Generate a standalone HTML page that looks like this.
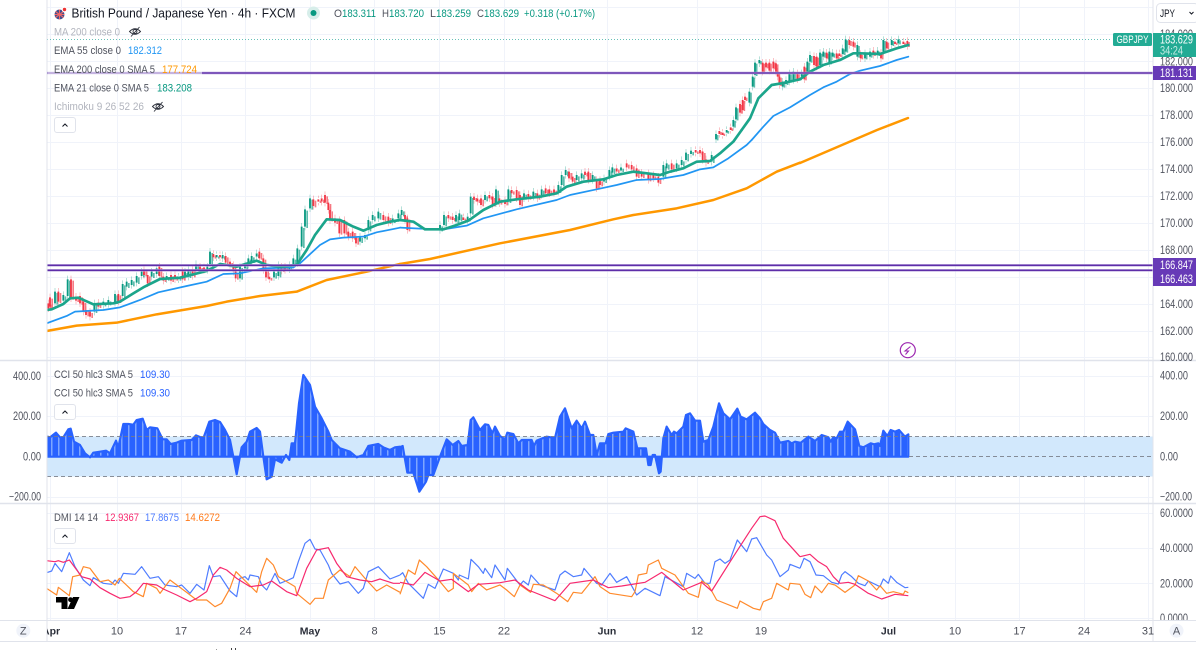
<!DOCTYPE html>
<html><head><meta charset="utf-8"><title>GBPJPY</title>
<style>
html,body{margin:0;padding:0;background:#fff;width:1196px;height:650px;overflow:hidden}
svg{display:block}
text{font-family:"Liberation Sans",sans-serif;font-size:11px;fill:#50535e}
.t{fill:#131722}.a{fill:#50535e;font-size:11.5px}.f{fill:#b2b5be}.d{text-anchor:middle;font-size:11px;fill:#4a4d57}
.b{font-weight:bold;fill:#2a2e39;font-size:10.5px}.g{stroke:#089981}.r{stroke:#f23645}
.o{fill:#089981;font-size:11px}
.ln{fill:none;stroke-linejoin:round;stroke-linecap:round}
</style></head><body>
<svg width="1196" height="650" viewBox="0 0 1196 650" xmlns="http://www.w3.org/2000/svg">
<defs>
<pattern id="st" patternUnits="userSpaceOnUse" width="21" height="30"><rect width="21" height="30" fill="#2962ff"/><rect x="6" width="4.500" height="30" fill="#7ea6ff"/></pattern>
<clipPath id="cp"><rect x="47" y="0" width="1106" height="360"/></clipPath>
<g id="c1" fill="none">
<path class="g" d="M165 365V400M190 375V392M203 328V378M283 400V425M310 395V405M325 390V402M345 372V398M368 342V378M380 335V350M395 330V345M410 318V338M425 305V318M455 305V320M470 295V312M500 318V328M535 320V328M555 305V318M565 300V320M588 282V300M622 290V300M630 245V282M650 255V262M668 255V265M720 290V325M735 285V295M745 265V285M755 258V275M770 250V260M822 305V322M835 285V318M868 285V298M880 265V285M892 235V280M905 170V230M915 118V170M930 85V115M1080 200V215M1095 195V205M1105 150V180M1118 135V150M1135 125V145M1178 145V155M1195 130V145"/>
<path class="r" d="M145 400V415M150 382V410M175 365V395M213 328V385M228 380V392M240 378V400M250 395V425M258 420V435M270 425V440M295 398V410M355 372V395M432 298V315M443 315V340M478 290V318M490 320V332M513 315V332M525 315V328M548 303V328M578 300V318M600 290V298M612 292V300M640 252V262M660 255V262M677 258V278M690 275V285M700 285V305M707 305V325M778 245V265M790 265V300M798 300V322M808 320V328M845 290V302M855 290V300M940 88V108M955 88V95M965 85V95M975 75V98M985 98V120M990 120V150M1005 145V158M1018 150V190M1033 150V190M1045 185V200M1058 185V205M1068 200V220M1150 135V150M1165 140V158"/>
</g>
<g id="c2" fill="none">
<path class="g" d="M5 240V255M120 285V300M132 255V285M168 255V275M178 250V270M203 260V270M212 200V250M255 195V210M288 178V220M325 178V215M372 190V205M400 185V200M425 178V195M475 165V185M485 135V165M497 120V135M530 135V150M545 130V145M578 135V150M612 145V155M628 120V140M637 112V128M663 112V122M790 105V140M800 100V115M830 100V115M845 90V105M858 68V90M873 62V72M935 75V95"/>
<path class="r" d="M15 255V270M22 265V300M145 255V265M158 260V270M190 262V270M222 200V210M232 205V215M243 205V225M268 195V205M278 200V225M298 205V220M315 210V222M335 180V190M350 180V205M360 195V225M385 192V205M412 190V205M437 175V190M448 178V190M462 178V188M507 125V145M518 140V155M555 125V135M565 125V150M590 150V175M600 150V165M650 115V125M680 100V112M695 105V118M710 115V140M725 128V140M745 130V150M760 135V145M775 140V158M815 100V118M887 60V68M900 60V70M908 65V90M918 88V98"/>
</g>
<g id="c3" fill="none">
<path class="g" d="M48 312V328M80 300V308M100 270V290M108 232V268M148 185V218M158 140V170M165 98V135M178 90V100M248 155V170M258 150V162M268 130V155M280 125V150M305 130V140M322 95V125M330 75V95M360 68V105M370 65V80M388 65V100M398 68V80M428 55V72M437 28V65M472 45V80M495 70V85M510 65V80M533 62V75M550 30V65M575 30V45M595 28V40"/>
<path class="r" d="M58 303V312M68 308V315M92 292V300M120 222V248M128 210V240M135 200V210M188 98V125M198 98V112M208 98V122M220 95V115M228 100V125M233 125V140M238 140V165M292 130V148M313 110V148M342 78V105M350 80V110M380 68V85M410 70V85M418 70V78M448 30V45M460 35V50M482 72V85M520 62V75M543 68V85M560 35V55M585 35V42M610 35V42M622 33V48"/>
</g>
</defs>

<!-- grid -->
<g stroke="#f0f3fa" stroke-width="1" fill="none">
<path d="M47 7.500H1153M47 34.500H1153M47 61.500H1153M47 88.500H1153M47 115.500H1153M47 142.500H1153M47 169.500H1153M47 196.500H1153M47 223.500H1153M47 250.500H1153M47 277.500H1153M47 304.500H1153M47 331.500H1153M47 357.500H1153"/>
<path d="M47 376.500H1153M47 416.500H1153M47 497.500H1153M47 513.500H1153M47 548.500H1153M47 583.500H1153M47 618.500H1153"/>
<path d="M50.500 0V620M117.500 0V620M181.500 0V620M245.500 0V620M310.500 0V620M374.500 0V620M439.500 0V620M504.500 0V620M607.500 0V620M697.500 0V620M761.500 0V620M888.500 0V620M955.500 0V620M1019.500 0V620M1084.500 0V620M1148.500 0V620"/>
</g>

<!-- candles -->
<g clip-path="url(#cp)">
<g transform="translate(0,170) scale(.33333)">
<g transform="translate(0,-11)" stroke-width="2" opacity=".45"><use href="#c1"/></g>
<g transform="translate(0,11)" stroke-width="2" opacity=".45"><use href="#c1"/></g>
<g transform="translate(6.500,4)" stroke-width="5" opacity=".65"><use href="#c1"/></g>
<g stroke-width="5.500"><use href="#c1"/></g>
</g>
<g transform="translate(400,130) scale(.33333)">
<g transform="translate(0,-11)" stroke-width="2" opacity=".45"><use href="#c2"/></g>
<g transform="translate(0,11)" stroke-width="2" opacity=".45"><use href="#c2"/></g>
<g transform="translate(6.500,4)" stroke-width="5" opacity=".65"><use href="#c2"/></g>
<g stroke-width="5.500"><use href="#c2"/></g>
</g>
<g transform="translate(700,30) scale(.33333)">
<g transform="translate(0,-11)" stroke-width="2" opacity=".45"><use href="#c3"/></g>
<g transform="translate(0,11)" stroke-width="2" opacity=".45"><use href="#c3"/></g>
<g transform="translate(5,3)" stroke-width="5" opacity=".65"><use href="#c3"/></g>
<g stroke-width="5.500"><use href="#c3"/></g>
</g>

<!-- orange EMA200 -->
<g class="ln" stroke="#ff9800" stroke-width="7.500">
<polyline class="ln" transform="translate(0,170) scale(.33333)" points="140,483 230,467 350,458 470,433 620,408 680,395 780,378 890,365 980,330 1100,305 1200,282"/>
<polyline class="ln" transform="translate(400,130) scale(.33333)" points="0,402 90,387 300,340 510,300 640,268 700,255 830,235 940,210 1040,175 1130,125 1200,98"/>
</g>
<polyline class="ln" stroke="#ff9800" stroke-width="2.500" points="800,163 877,130 908,118"/>
<!-- blue EMA55 -->
<g stroke="#2196f3" stroke-width="5.200">
<polyline class="ln" transform="translate(0,170) scale(.33333)" points="140,460 200,438 225,425 310,420 360,412 420,390 475,367 560,348 620,335 670,312 720,310 790,295 880,292 900,280 960,225 990,208 1030,203 1090,200 1130,187 1200,173"/>
<polyline class="ln" transform="translate(400,130) scale(.33333)" points="0,293 60,296 130,298 200,287 250,265 350,238 470,210 510,195 590,178 650,165 710,150 780,147 850,135 900,118 940,112 985,85 1040,45 1055,30"/>
<polyline class="ln" transform="translate(700,30) scale(.33333)" points="155,330 190,290 220,258 270,232 330,195 370,172 410,155 450,132 480,122 540,108 590,90 625,80"/>
</g>
<!-- green EMA21 -->
<g stroke="#1ba58b" stroke-width="8">
<polyline class="ln" transform="translate(0,170) scale(.33333)" points="140,420 155,418 190,402 210,385 235,383 280,403 340,400 360,395 400,370 430,352 480,327 540,323 620,303 660,282 710,290 770,272 800,285 840,290 890,285 920,240 945,195 980,148 1020,150 1060,170 1090,182 1130,165 1170,155 1200,150"/>
<polyline class="ln" transform="translate(400,130) scale(.33333)" points="0,270 40,275 75,298 130,298 170,285 205,272 250,240 300,215 350,208 420,200 470,190 500,170 550,155 610,148 650,135 700,125 740,130 780,135 810,125 850,115 890,95 930,93 960,70 1000,35 1025,0"/>
<polyline class="ln" transform="translate(700,30) scale(.33333)" points="125,300 150,265 175,205 215,165 245,160 300,148 330,125 370,105 420,90 460,70 480,70 540,72 590,55 625,45"/>
</g>
</g>

<!-- price line -->
<path d="M47 39.500H1112" stroke="#26a69a" stroke-width="1" stroke-dasharray="1 2" fill="none" opacity=".7"/>
<!-- horizontal purple levels -->
<g fill="none">
<path d="M47 73H1153M47 265.300H1153M47 270.300H1153" stroke="#b39ddb" stroke-width="2.400"/>
<path d="M47 73H1153M47 265.300H1153M47 270.300H1153" stroke="#5e2ea8" stroke-width="1.300"/>
</g>

<!-- CCI -->
<rect x="47" y="436.500" width="1106" height="40" fill="#d2e8fc"/>
<g stroke="#2962ff" stroke-width="6.500" stroke-linejoin="round" fill="url(#st)">
<polygon transform="translate(0,360) scale(.33333)" points="143,290 143,230 150,232 168,218 180,232 190,232 205,208 212,206 222,245 240,255 255,280 270,292 280,278 300,275 318,272 330,280 348,242 355,262 370,192 385,192 400,194 410,180 428,176 440,210 450,202 472,205 488,238 500,238 512,252 530,248 545,242 575,240 588,226 610,235 628,185 645,180 660,186 675,210 690,240 700,290 710,343 725,262 740,245 750,215 770,204 780,215 790,290 800,358 815,350 825,298 845,308 858,285 868,300 875,250 885,250 897,130 910,45 930,75 945,140 965,175 985,215 995,240 1020,265 1050,275 1070,292 1090,285 1105,258 1135,252 1150,262 1170,270 1185,262 1200,260 1200,290"/>
<polygon transform="translate(400,360) scale(.33333)" points="0,290 0,262 8,258 22,338 40,338 58,395 78,365 85,345 100,345 120,290 140,238 158,255 175,243 185,258 203,255 212,180 220,172 240,210 255,193 265,195 277,220 285,200 300,228 315,238 322,218 340,222 355,250 365,240 395,240 402,258 410,242 440,230 465,234 480,170 495,145 515,205 530,182 545,205 555,185 570,225 580,225 590,285 600,250 617,250 625,222 640,218 670,215 677,205 700,215 712,265 738,265 745,315 752,315 758,285 765,285 777,340 782,335 790,235 800,200 815,225 822,215 830,220 850,200 858,165 870,160 885,182 900,182 910,245 925,240 940,200 957,130 970,160 990,178 1012,146 1022,170 1040,178 1065,158 1080,175 1090,192 1110,210 1125,218 1140,248 1165,243 1175,250 1185,245 1200,248 1200,290"/>
<polygon transform="translate(800,340) scale(.33333)" points="0,350 0,310 25,290 45,303 65,285 85,292 92,305 100,292 110,295 120,275 130,275 143,245 165,268 178,318 190,322 212,310 222,313 235,310 240,318 250,272 262,288 272,270 285,275 297,270 315,290 325,283 325,350"/>
</g>
<g stroke="#787b86" stroke-width="1" stroke-dasharray="4 3" fill="none" opacity=".85">
<path d="M47 436.500H1153M47 476.500H1153M909 456.500H1153"/>
</g>

<!-- DMI -->
<g fill="none" stroke-width="3.600" stroke-linejoin="round">
<g stroke="#4f7dff">
<polyline transform="translate(0,505) scale(.33333)" points="140,203 155,198 165,175 185,200 208,143 225,185 250,225 270,242 280,218 310,235 335,238 345,225 355,235 370,205 405,208 425,185 450,220 475,215 495,240 530,245 545,240 570,265 590,238 612,255 628,182 640,215 660,212 690,258 710,275 720,220 735,215 745,225 750,210 775,215 785,240 800,255 825,205 840,235 865,225 880,218 895,170 915,115 930,103 945,132 960,135 985,180 995,205 1020,237 1045,230 1075,265 1090,250 1105,200 1135,185 1170,222 1195,212 1200,210"/>
<polyline transform="translate(400,505) scale(.33333)" points="0,210 8,203 25,235 70,280 85,238 105,250 130,192 160,205 175,225 178,210 205,222 213,163 235,185 250,205 255,190 275,218 285,180 315,225 322,190 360,240 370,228 385,240 393,210 420,240 465,255 480,210 495,198 520,215 545,210 552,190 590,235 605,240 630,205 650,232 680,215 710,270 735,250 780,272 795,215 850,245 860,205 885,220 895,208 915,235 930,235 945,170 960,162 975,175 990,165 1012,105 1040,140 1055,102 1070,98 1100,150 1115,165 1140,215 1165,195 1170,178 1200,190"/>
<polyline transform="translate(800,505) scale(.33333)" points="0,190 12,160 30,170 48,210 70,212 95,232 115,237 125,210 135,200 155,215 175,235 195,242 205,228 240,245 250,222 265,235 272,213 290,232 315,248 325,247"/>
</g>
<g stroke="#ff8a2c">
<polyline transform="translate(0,505) scale(.33333)" points="140,250 170,270 175,247 208,272 218,215 240,210 250,185 270,190 300,230 325,225 345,240 358,220 400,260 430,275 440,235 470,250 480,265 510,225 560,262 590,285 620,285 645,305 665,295 690,250 708,200 770,262 785,200 800,160 820,180 835,215 885,245 890,265 930,298 945,280 970,280 985,225 1020,195 1050,215 1065,185 1095,220 1130,258 1160,240 1200,262"/>
<polyline transform="translate(400,505) scale(.33333)" points="0,268 25,195 45,208 58,165 80,185 120,230 145,260 160,250 160,205 205,240 215,260 235,235 260,255 300,240 320,255 343,275 360,240 392,262 400,238 430,240 470,265 503,290 520,262 545,265 585,215 600,245 630,265 695,275 705,260 715,210 740,205 745,180 775,165 785,190 825,210 865,265 895,277 905,228 925,240 950,285 1012,310 1020,288 1060,310 1080,315 1090,290 1115,280 1130,235 1165,255 1170,235 1200,238"/>
<polyline transform="translate(800,505) scale(.33333)" points="0,238 15,268 32,278 45,243 65,263 85,235 105,240 135,262 165,240 175,212 205,228 230,255 240,242 260,265 280,260 310,268 315,258 325,263"/>
</g>
<g stroke="#f7296e">
<polyline transform="translate(0,505) scale(.33333)" points="140,167 165,170 175,167 190,172 208,165 225,188 245,215 270,222 300,248 330,265 360,280 390,275 410,260 430,235 470,240 490,252 530,270 570,290 590,280 620,260 640,210 660,187 680,195 710,220 750,245 790,240 815,228 860,260 890,272 920,190 950,135 985,128 1010,175 1040,215 1080,225 1115,230 1140,222 1180,235 1200,235"/>
<polyline transform="translate(400,505) scale(.33333)" points="0,232 40,240 75,202 120,228 155,223 205,260 235,238 300,233 345,225 385,255 465,287 510,235 580,225 625,248 665,243 735,232 785,202 850,255 905,232 935,258 1000,155 1055,70 1080,35 1095,33 1125,47 1150,100 1200,155"/>
<polyline transform="translate(800,505) scale(.33333)" points="0,155 30,148 55,170 80,185 100,215 120,235 145,232 165,238 205,265 245,282 285,268 325,272"/>
</g>
</g>

<!-- TV logo -->
<path d="M56 597H67.500V609H61.500V602.500H56Z M79.500 597L74 609H67.500L73 597Z" fill="#000"/>
<circle cx="70.500" cy="599.700" r="2.400" fill="#000"/>

<!-- lightning -->
<circle cx="907.800" cy="350.200" r="7.500" fill="#fff" stroke="#9c27b0" stroke-width="1.200"/>
<path d="M910.500 346.500L905 351H908.500L905.500 354.500" fill="none" stroke="#9c27b0" stroke-width="1.100"/>

<!-- borders -->
<g fill="none" stroke="#e0e3eb">
<path d="M47 0V641M1153 0V641" stroke-width="1"/>
<path d="M0 360.500H1196M0 503.500H1196" stroke-width="1.500"/>
<path d="M0 620.500H1196M0 641.500H1196" stroke-width="1"/>
</g>

<!-- legend -->
<rect x="48" y="66" width="154" height="14" fill="#fff" opacity=".55"/>
<circle cx="59.500" cy="14.500" r="5" fill="#3d4f8f"/>
<path d="M55.500 11.500L63.500 17.500M63.500 11.500L55.500 17.500M54.500 14.500H64.500M59.500 9.500V19.500" stroke="#e66" stroke-width="1.100"/>
<circle cx="64.500" cy="9.500" r="2.800" fill="#fff"/><circle cx="64.500" cy="9.500" r="1.700" fill="#e33"/>
<text class="t" x="71.500" y="17.500" style="font-size:12.500px" textLength="224" lengthAdjust="spacingAndGlyphs">British Pound / Japanese Yen · 4h · FXCM</text>
<circle cx="313.500" cy="13" r="6.500" fill="#d7eeea"/><circle cx="313.500" cy="13" r="3" fill="#089981"/>
<text x="334" y="17" textLength="8" lengthAdjust="spacingAndGlyphs">O</text><text class="o" x="342" y="17" textLength="34" lengthAdjust="spacingAndGlyphs">183.311</text>
<text x="382" y="17" textLength="7" lengthAdjust="spacingAndGlyphs">H</text><text class="o" x="389" y="17" textLength="35" lengthAdjust="spacingAndGlyphs">183.720</text>
<text x="430" y="17" textLength="6" lengthAdjust="spacingAndGlyphs">L</text><text class="o" x="436" y="17" textLength="35" lengthAdjust="spacingAndGlyphs">183.259</text>
<text x="477" y="17" textLength="7" lengthAdjust="spacingAndGlyphs">C</text><text class="o" x="484" y="17" textLength="35" lengthAdjust="spacingAndGlyphs">183.629</text>
<text class="o" x="524" y="17" textLength="71" lengthAdjust="spacingAndGlyphs">+0.318 (+0.17%)</text>

<text class="f" x="54" y="35.500" textLength="66" lengthAdjust="spacingAndGlyphs">MA 200 close 0</text>
<g fill="none" stroke="#2a2e39" stroke-width=".9"><path d="M129.500 31.500Q135 26 140.500 31.500Q135 37 129.500 31.500Z"/><circle cx="135" cy="31.500" r="2"/><path d="M131 36.500L139.500 27"/></g>
<text x="54" y="54" textLength="67" lengthAdjust="spacingAndGlyphs">EMA 55 close 0</text>
<text x="128" y="54" style="fill:#2196f3" textLength="34" lengthAdjust="spacingAndGlyphs">182.312</text>
<text x="54" y="73" textLength="101" lengthAdjust="spacingAndGlyphs">EMA 200 close 0 SMA 5</text>
<text x="162" y="73" style="fill:#ff9800" textLength="35" lengthAdjust="spacingAndGlyphs">177.724</text>
<text x="54" y="91.500" textLength="95" lengthAdjust="spacingAndGlyphs">EMA 21 close 0 SMA 5</text>
<text x="157" y="91.500" style="fill:#089981" textLength="35" lengthAdjust="spacingAndGlyphs">183.208</text>
<text class="f" x="54" y="110" textLength="90" lengthAdjust="spacingAndGlyphs">Ichimoku 9 26 52 26</text>
<g fill="none" stroke="#2a2e39" stroke-width=".9"><path d="M152.500 106.500Q158 101 163.500 106.500Q158 112 152.500 106.500Z"/><circle cx="158" cy="106.500" r="2"/><path d="M154 111.500L162.500 102"/></g>
<rect x="54.500" y="117.500" width="21" height="15" rx="2.500" fill="#fff" stroke="#e0e3eb"/>
<path d="M62.500 126.500L65 124L67.500 126.500" fill="none" stroke="#131722" stroke-width="1"/>

<text x="54" y="378" textLength="79" lengthAdjust="spacingAndGlyphs">CCI 50 hlc3 SMA 5</text>
<text x="140" y="378" style="fill:#2962ff" textLength="30" lengthAdjust="spacingAndGlyphs">109.30</text>
<text x="54" y="396.500" textLength="79" lengthAdjust="spacingAndGlyphs">CCI 50 hlc3 SMA 5</text>
<text x="140" y="396.500" style="fill:#2962ff" textLength="30" lengthAdjust="spacingAndGlyphs">109.30</text>
<rect x="54.500" y="404.500" width="21" height="15" rx="2.500" fill="#fff" stroke="#e0e3eb"/>
<path d="M62.500 413.500L65 411L67.500 413.500" fill="none" stroke="#131722" stroke-width="1"/>

<text x="54" y="521" textLength="44" lengthAdjust="spacingAndGlyphs">DMI 14 14</text>
<text x="105" y="521" style="fill:#f7296e" textLength="34" lengthAdjust="spacingAndGlyphs">12.9367</text>
<text x="145" y="521" style="fill:#4f7dff" textLength="34" lengthAdjust="spacingAndGlyphs">17.8675</text>
<text x="185" y="521" style="fill:#ff7a1a" textLength="35" lengthAdjust="spacingAndGlyphs">14.6272</text>
<rect x="54.500" y="528.500" width="21" height="15" rx="2.500" fill="#fff" stroke="#e0e3eb"/>
<path d="M62.500 537.500L65 535L67.500 537.500" fill="none" stroke="#131722" stroke-width="1"/>

<!-- left axis on CCI -->
<text class="a" x="13" y="380" textLength="28" lengthAdjust="spacingAndGlyphs">400.00</text>
<text class="a" x="13" y="420" textLength="28" lengthAdjust="spacingAndGlyphs">200.00</text>
<text class="a" x="23" y="460.500" textLength="18" lengthAdjust="spacingAndGlyphs">0.00</text>
<text class="a" x="9" y="500.500" textLength="32" lengthAdjust="spacingAndGlyphs">−200.00</text>

<!-- right axis main -->
<g>
<text class="a" x="1160" y="38" textLength="33" lengthAdjust="spacingAndGlyphs">184.000</text>
<text class="a" x="1160" y="65.500" textLength="33" lengthAdjust="spacingAndGlyphs">182.000</text>
<text class="a" x="1160" y="92" textLength="33" lengthAdjust="spacingAndGlyphs">180.000</text>
<text class="a" x="1160" y="119" textLength="33" lengthAdjust="spacingAndGlyphs">178.000</text>
<text class="a" x="1160" y="146" textLength="33" lengthAdjust="spacingAndGlyphs">176.000</text>
<text class="a" x="1160" y="173" textLength="33" lengthAdjust="spacingAndGlyphs">174.000</text>
<text class="a" x="1160" y="200" textLength="33" lengthAdjust="spacingAndGlyphs">172.000</text>
<text class="a" x="1160" y="227" textLength="33" lengthAdjust="spacingAndGlyphs">170.000</text>
<text class="a" x="1160" y="254" textLength="33" lengthAdjust="spacingAndGlyphs">168.000</text>
<text class="a" x="1160" y="308" textLength="33" lengthAdjust="spacingAndGlyphs">164.000</text>
<text class="a" x="1160" y="335" textLength="33" lengthAdjust="spacingAndGlyphs">162.000</text>
<text class="a" x="1160" y="361" textLength="33" lengthAdjust="spacingAndGlyphs">160.000</text>
<text class="a" x="1160" y="379.500" textLength="28" lengthAdjust="spacingAndGlyphs">400.00</text>
<text class="a" x="1160" y="420" textLength="28" lengthAdjust="spacingAndGlyphs">200.00</text>
<text class="a" x="1160" y="460.500" textLength="18" lengthAdjust="spacingAndGlyphs">0.00</text>
<text class="a" x="1160" y="500.500" textLength="32" lengthAdjust="spacingAndGlyphs">−200.00</text>
<text class="a" x="1160" y="517" textLength="33" lengthAdjust="spacingAndGlyphs">60.0000</text>
<text class="a" x="1160" y="552" textLength="33" lengthAdjust="spacingAndGlyphs">40.0000</text>
<text class="a" x="1160" y="587.500" textLength="33" lengthAdjust="spacingAndGlyphs">20.0000</text>
<text class="a" x="1160" y="622" textLength="28" lengthAdjust="spacingAndGlyphs">0.0000</text>
</g>
<rect x="1154" y="621" width="42" height="4" fill="#fff"/>
<path d="M1153 620.500H1196" stroke="#e0e3eb"/>

<!-- tags -->
<rect x="1113" y="33" width="39" height="13" rx="1.500" fill="#22ab94"/>
<text x="1116.500" y="43" style="fill:#fff" textLength="32" lengthAdjust="spacingAndGlyphs">GBPJPY</text>
<rect x="1153" y="33" width="43" height="24" fill="#22ab94"/>
<text x="1160" y="43.500" style="fill:#fff;font-size:11.500px" textLength="33" lengthAdjust="spacingAndGlyphs">183.629</text>
<text x="1160" y="54.500" style="fill:#c5ebe4;font-size:11.500px" textLength="23" lengthAdjust="spacingAndGlyphs">34:24</text>
<rect x="1153" y="66" width="43" height="14" fill="#673ab7"/>
<text x="1160" y="77" style="fill:#fff;font-size:11.500px" textLength="33" lengthAdjust="spacingAndGlyphs">181.131</text>
<rect x="1153" y="258" width="43" height="14" fill="#673ab7"/>
<text x="1160" y="269" style="fill:#fff;font-size:11.500px" textLength="33" lengthAdjust="spacingAndGlyphs">166.847</text>
<rect x="1153" y="272" width="43" height="14" fill="#673ab7"/>
<text x="1160" y="283" style="fill:#fff;font-size:11.500px" textLength="33" lengthAdjust="spacingAndGlyphs">166.463</text>

<!-- JPY button -->
<rect x="1156.500" y="3.500" width="42" height="19" rx="4" fill="#fff" stroke="#e0e3eb"/>
<text x="1160" y="17" style="fill:#131722" textLength="15" lengthAdjust="spacingAndGlyphs">JPY</text>
<path d="M1189.500 12L1191.500 14L1193.500 12" fill="none" stroke="#131722" stroke-width="1"/>

<!-- time axis -->
<circle cx="23.300" cy="630.700" r="7" fill="#f0f3fa"/>
<text x="23.300" y="634.500" class="d" style="fill:#50535e">Z</text>
<circle cx="1176.500" cy="630.700" r="7" fill="#f0f3fa"/>
<text x="1176.500" y="634.500" class="d" style="fill:#50535e">A</text>
<svg x="47" y="622" width="20" height="18"><text x="-5" y="12.500" class="b">Apr</text></svg>
<text class="d" x="117" y="634.500">10</text>
<text class="d" x="181" y="634.500">17</text>
<text class="d" x="245.500" y="634.500">24</text>
<text class="d b" x="310" y="634.500">May</text>
<text class="d" x="374.500" y="634.500">8</text>
<text class="d" x="439.500" y="634.500">15</text>
<text class="d" x="504" y="634.500">22</text>
<text class="d b" x="607" y="634.500">Jun</text>
<text class="d" x="697" y="634.500">12</text>
<text class="d" x="761" y="634.500">19</text>
<text class="d b" x="888.500" y="634.500">Jul</text>
<text class="d" x="955" y="634.500">10</text>
<text class="d" x="1019.500" y="634.500">17</text>
<text class="d" x="1084" y="634.500">24</text>
<text class="d" x="1148" y="634.500">31</text>
<rect x="216" y="649" width="1" height="1" fill="#999"/><rect x="231" y="648" width="1" height="2" fill="#444"/><rect x="235" y="648" width="1" height="2" fill="#444"/>
</svg>
</body></html>
